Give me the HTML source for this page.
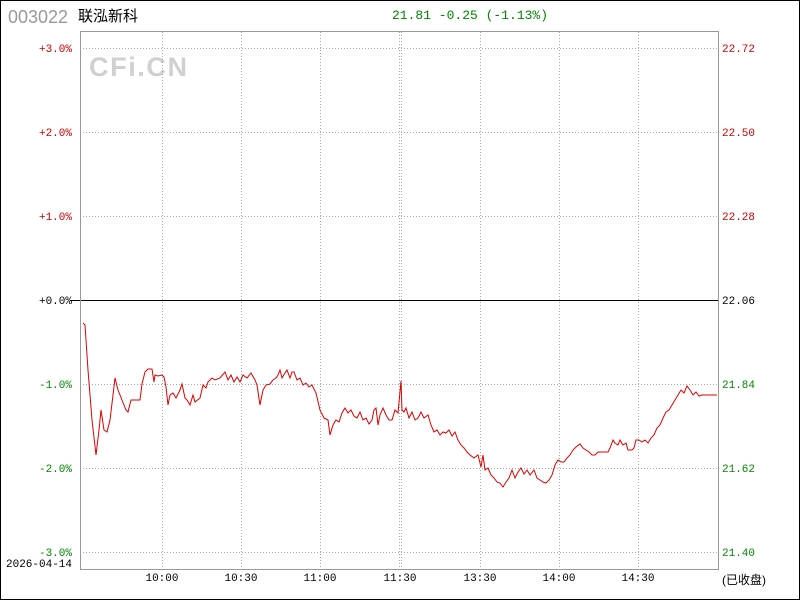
<!DOCTYPE html>
<html><head><meta charset="utf-8"><style>
html,body{margin:0;padding:0;background:#fff}
svg{display:block}
text{font-family:"Liberation Mono","Noto Sans CJK SC",monospace;font-size:11px}
</style></head><body>
<svg width="800" height="600" xmlns="http://www.w3.org/2000/svg">
<rect x="0.5" y="0.5" width="799" height="599" fill="#fff" stroke="#000"/>
<text x="8" y="23" style="font-family:'Liberation Sans',sans-serif;font-size:18px" fill="#999">003022</text>
<text x="78" y="21" style="font-family:'Liberation Sans','Noto Sans CJK SC',sans-serif;font-size:15px" fill="#000">联泓新科</text>
<text x="392" y="19" style="font-size:13px" fill="#080">21.81 -0.25 (-1.13%)</text>
<text x="89" y="76" style="font-family:'Liberation Sans',sans-serif;font-size:27px;font-weight:bold" fill="#d0d0d0" textLength="98">CFi.CN</text>
<g stroke="#aaa" stroke-dasharray="1,2" stroke-width="1">
<line x1="80" y1="48.5" x2="718" y2="48.5"/><line x1="80" y1="132.5" x2="718" y2="132.5"/><line x1="80" y1="216.5" x2="718" y2="216.5"/><line x1="80" y1="384.5" x2="718" y2="384.5"/><line x1="80" y1="468.5" x2="718" y2="468.5"/><line x1="80" y1="552.5" x2="718" y2="552.5"/>
<line x1="162.5" y1="32" x2="162.5" y2="569"/><line x1="241.5" y1="32" x2="241.5" y2="569"/><line x1="320.5" y1="32" x2="320.5" y2="569"/><line x1="399.5" y1="32" x2="399.5" y2="569"/><line x1="401.5" y1="32" x2="401.5" y2="569"/><line x1="480.5" y1="32" x2="480.5" y2="569"/><line x1="559.5" y1="32" x2="559.5" y2="569"/><line x1="638.5" y1="32" x2="638.5" y2="569"/>
</g>
<line x1="70" y1="300.5" x2="718" y2="300.5" stroke="#000"/>
<rect x="80.5" y="31.5" width="638" height="538" fill="none" stroke="#999"/>
<g text-anchor="end">
<text x="72" y="52" fill="#c00">+3.0%</text><text x="72" y="136" fill="#c00">+2.0%</text><text x="72" y="220" fill="#c00">+1.0%</text><text x="72" y="304" fill="#000">+0.0%</text><text x="72" y="388" fill="#080">-1.0%</text><text x="72" y="472" fill="#080">-2.0%</text><text x="72" y="556" fill="#080">-3.0%</text>
</g>
<text x="6" y="567" fill="#000">2026-04-14</text>
<g>
<text x="722" y="52" fill="#c00">22.72</text><text x="722" y="136" fill="#c00">22.50</text><text x="722" y="220" fill="#c00">22.28</text><text x="722" y="304" fill="#000">22.06</text><text x="722" y="388" fill="#080">21.84</text><text x="722" y="472" fill="#080">21.62</text><text x="722" y="556" fill="#080">21.40</text>
</g>
<g text-anchor="middle" fill="#000">
<text x="162" y="581">10:00</text><text x="241" y="581">10:30</text><text x="320" y="581">11:00</text><text x="400" y="581">11:30</text><text x="480" y="581">13:30</text><text x="559" y="581">14:00</text><text x="638" y="581">14:30</text>
</g>
<text x="722" y="584" fill="#000" style="font-family:'Liberation Sans','Noto Sans CJK SC',sans-serif;font-size:12px">(已收盘)</text>
<polyline fill="none" stroke="#d00" stroke-width="1" points="83,323 85,325 88,370 92,420 96,455 99,430 101,410 104,430 107,432 110,420 113,395 115,378 118,390 122,400 126,410 128,412 131,400 134,400 140,400 142,384 145,372 148,369 152,369 154,382 155,375 158,376 162,375 164,377 166,387 168,405 170,395 173,393 176,398 180,390 182,384 185,398 187,400 190,405 193,395 195,402 200,398 203,385 206,388 208,382 212,378 215,380 220,378 225,372 228,380 231,375 234,382 237,377 240,382 243,375 247,378 251,373 255,380 257,385 260,405 263,390 266,385 270,384 273,380 276,378 278,375 280,370 282,378 285,373 287,370 290,378 292,372 294,372 297,380 300,378 303,385 306,383 309,387 312,385 316,393 320,410 324,418 328,420 330,435 333,425 336,420 339,422 342,413 345,408 348,413 351,410 354,416 357,418 360,412 363,420 366,418 369,424 372,420 374,410 376,408 378,425 380,415 383,408 386,415 389,420 392,420 395,410 398,413 401,381 402,410 404,412 406,408 409,418 412,412 415,420 418,418 421,412 424,418 428,415 431,425 434,432 437,430 440,435 443,432 446,433 449,430 452,436 455,432 458,440 461,445 464,448 467,452 470,455 474,458 478,455 481,467 483,455 485,470 488,468 491,475 494,478 497,482 500,483 503,487 506,482 509,478 512,470 515,478 518,472 521,468 524,474 527,470 530,475 534,470 537,478 540,480 543,482 546,483 549,480 552,475 555,465 558,460 561,462 564,462 567,458 570,455 573,450 576,447 580,444 583,448 586,450 589,452 592,455 595,455 598,452 601,452 608,452 610,448 613,440 615,443 618,445 620,440 623,445 626,443 628,450 632,450 634,448 636,440 639,440 642,442 645,440 648,443 651,438 654,435 657,428 660,425 663,418 666,412 669,410 672,405 675,400 678,395 681,390 684,393 687,386 690,390 693,395 696,392 699,396 702,395 717,395"/>
</svg>
</body></html>
